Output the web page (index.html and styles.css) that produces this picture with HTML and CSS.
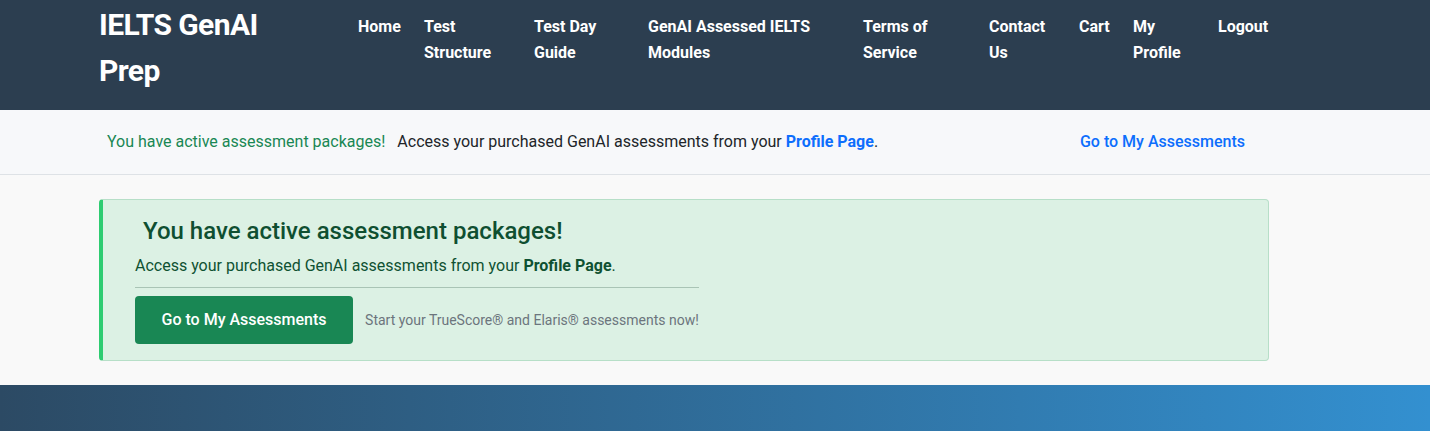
FILE: index.html
```html
<!DOCTYPE html>
<html lang="en">
<head>
<meta charset="utf-8">
<title>IELTS GenAI Prep</title>
<link rel="stylesheet" href="styles.css">
</head>
<body>
<header class="site-header">
  <div class="container header-inner">
    <a class="brand" href="#">IELTS GenAI Prep</a>
    <nav class="main-nav">
      <ul class="nav-list">
        <li class="nav-item w-home"><a href="#">Home</a></li>
        <li class="nav-item w-structure"><a href="#">Test Structure</a></li>
        <li class="nav-item w-guide"><a href="#">Test Day Guide</a></li>
        <li class="nav-item w-modules"><a href="#">GenAI Assessed IELTS Modules</a></li>
        <li class="nav-item w-terms"><a href="#">Terms of Service</a></li>
        <li class="nav-item w-contact"><a href="#">Contact Us</a></li>
        <li class="nav-item w-cart"><a href="#">Cart</a></li>
        <li class="nav-item w-profile"><a href="#">My Profile</a></li>
        <li class="nav-item w-logout"><a href="#">Logout</a></li>
      </ul>
    </nav>
  </div>
</header>

<div class="notice-bar">
  <div class="container notice-inner">
    <p class="notice-text"><span class="notice-strong">You have active assessment packages!</span><span class="notice-rest">Access your purchased GenAI assessments from your <a class="link-blue" href="#">Profile Page</a>.</span></p>
    <a class="notice-link" href="#">Go to My Assessments</a>
  </div>
</div>

<main class="main">
  <div class="container">
    <section class="package-card">
      <h2 class="package-title">You have active assessment packages!</h2>
      <div class="package-body">
        <p class="package-text">Access your purchased GenAI assessments from your <strong>Profile Page</strong>.</p>
        <hr class="package-rule">
        <div class="package-actions">
          <a class="btn-success" href="#">Go to My Assessments</a>
          <span class="package-note">Start your TrueScore® and Elaris® assessments now!</span>
        </div>
      </div>
    </section>
  </div>
</main>

<footer class="site-footer"></footer>
</body>
</html>
```
FILE: styles.css
```css
* { box-sizing: border-box; }
html, body { margin: 0; padding: 0; }
body {
  font-family: Roboto, "Liberation Sans", Arial, sans-serif;
  font-size: 16px;
  line-height: 24px;
  color: #212529;
  background: #f9f9f9;
}
a { text-decoration: none; }

.container {
  width: 1170px;
  margin-left: 99px;
}

/* Header */
.site-header {
  background: #2c3e50;
  height: 110px;
}
.header-inner {
  display: flex;
  align-items: flex-start;
  justify-content: space-between;
  padding-top: 2px;
}
.brand {
  display: block;
  width: 200px;
  color: #fff;
  font-size: 30px;
  font-weight: 700;
  line-height: 46px;
  letter-spacing: -0.6px;
}
.main-nav { padding-top: 12px; }
.nav-list {
  list-style: none;
  margin: 0;
  padding: 0;
  display: flex;
  gap: 24px;
}
.nav-item a {
  color: #fff;
  font-weight: 700;
  font-size: 16px;
  line-height: 26px;
  display: block;
}
.w-home { width: 42px; }
.w-structure { width: 86px; }
.w-guide { width: 90px; }
.w-modules { width: 191px; }
.w-terms { width: 102px; }
.w-contact { width: 66px; }
.w-cart { width: 30px; }
.w-profile { width: 61px; }
.w-logout { width: 51px; }

/* Notice bar */
.notice-bar {
  background: #f7f8fa;
  border-bottom: 1px solid #dee2e6;
  padding: 20px 0;
}
.notice-inner {
  display: flex;
  align-items: center;
  justify-content: space-between;
  padding-left: 8px;
  padding-right: 24px;
}
.notice-text { margin: 0; }
.notice-strong { color: #198754; margin-right: 12px; }
.notice-rest { color: #212529; }
.link-blue { color: #0d6efd; font-weight: 700; }
.notice-link { color: #0d6efd; font-weight: 500; }

/* Main */
.main {
  padding: 24px 0 24px;
  background: #f9f9f9;
}
.package-card {
  background: #dcf1e4;
  border: 1px solid #b7dfc8;
  border-left: 4px solid #2ecc71;
  border-radius: 4px;
  padding: 17px 32px 16px;
}
.package-title {
  margin: 0 0 8px 8px;
  font-size: 24px;
  line-height: 29px;
  font-weight: 500;
  color: #0f4f31;
}
.package-body {
  width: fit-content;
}
.package-text {
  margin: 0 0 9px;
  color: #0f5132;
}
.package-text strong { font-weight: 700; }
.package-rule {
  border: 0;
  border-top: 1px solid #a9c4b5;
  margin: 0 0 8px;
}
.package-actions {
  display: flex;
  align-items: center;
  gap: 12px;
}
.btn-success {
  display: inline-block;
  background: #198754;
  color: #fff;
  font-weight: 500;
  padding: 12px 26.5px;
  border-radius: 4px;
  line-height: 24px;
}
.package-note {
  color: #6c757d;
  font-size: 14px;
}

/* Footer */
.site-footer {
  height: 46px;
  background: linear-gradient(to right, #2c4a64, #3390d0);
}
```
